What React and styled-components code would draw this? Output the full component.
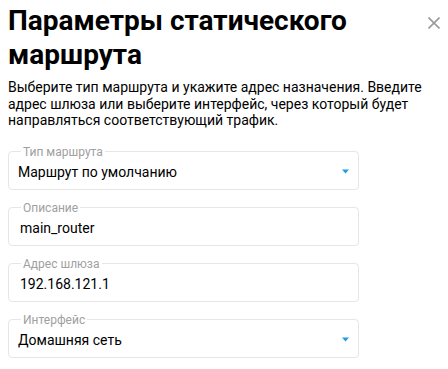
import React from "react";
import styled, { createGlobalStyle } from "styled-components";

const Global = createGlobalStyle`
  html, body { margin: 0; padding: 0; background: #fff; }
  body { font-family: Roboto, "Noto Sans", Arial, sans-serif; color: #000; }
  * { box-sizing: border-box; }
`;

const Dialog = styled.div`
  width: 448px;
  padding: 4px 8px 0 8px;
`;

const Header = styled.div`
  display: flex;
  align-items: flex-start;
  justify-content: space-between;
`;

const Title = styled.h1`
  margin: 0;
  font-size: 28px;
  line-height: 34px;
  font-weight: 700;
  color: #000;
  width: 400px;
`;

const Close = styled.button`
  border: 0;
  background: none;
  padding: 0;
  margin: 13px 0 0 0;
  width: 12px;
  height: 12px;
  display: flex;
  cursor: pointer;
`;

const Description = styled.p`
  margin: 7px 0 0 0;
  font-size: 14px;
  line-height: 16.5px;
  color: #000;
`;

const Form = styled.div`
  display: flex;
  flex-direction: column;
  gap: 11px;
  margin-top: 16px;
  width: 351px;
`;

const Field = styled.fieldset`
  margin: 0;
  padding: 0;
  border: 1px solid #e6e6e6;
  border-radius: 4px;
  min-width: 0;
`;

const Legend = styled.legend`
  margin-left: 12px;
  padding: 0 2px;
  font-size: 12px;
  line-height: 14px;
  color: #a0a0a0;
`;

const Value = styled.div`
  display: flex;
  align-items: center;
  justify-content: space-between;
  padding: 1px 9px 5px ${(p) => (p.$select ? "9px" : "11px")};
  font-size: 14px;
  line-height: 24px;
  color: #000;
`;

const Arrow = styled.svg`
  width: 7px;
  height: 5px;
  flex: none;
`;

function Select({ label, value }) {
  return (
    <Field>
      <Legend>{label}</Legend>
      <Value $select>
        <span>{value}</span>
        <Arrow viewBox="0 0 7 5">
          <path d="M0 0.5 H7 L3.5 4.5 Z" fill="#1e9ee0" />
        </Arrow>
      </Value>
    </Field>
  );
}

function Input({ label, value }) {
  return (
    <Field>
      <Legend>{label}</Legend>
      <Value>
        <span>{value}</span>
      </Value>
    </Field>
  );
}

export default function App() {
  return (
    <>
      <Global />
      <Dialog>
        <Header>
          <Title>Параметры статического маршрута</Title>
          <Close aria-label="Закрыть">
            <svg width="12" height="12" viewBox="0 0 12 12">
              <path d="M0.5 0.5 L11.5 11.5 M11.5 0.5 L0.5 11.5" stroke="#9a9a9a" strokeWidth="1.6" />
            </svg>
          </Close>
        </Header>
        <Description>
          Выберите тип маршрута и укажите адрес назначения. Введите адрес шлюза или выберите интерфейс, через который будет направляться соответствующий трафик.
        </Description>
        <Form>
          <Select label="Тип маршрута" value="Маршрут по умолчанию" />
          <Input label="Описание" value="main_router" />
          <Input label="Адрес шлюза" value="192.168.121.1" />
          <Select label="Интерфейс" value="Домашняя сеть" />
        </Form>
      </Dialog>
    </>
  );
}
